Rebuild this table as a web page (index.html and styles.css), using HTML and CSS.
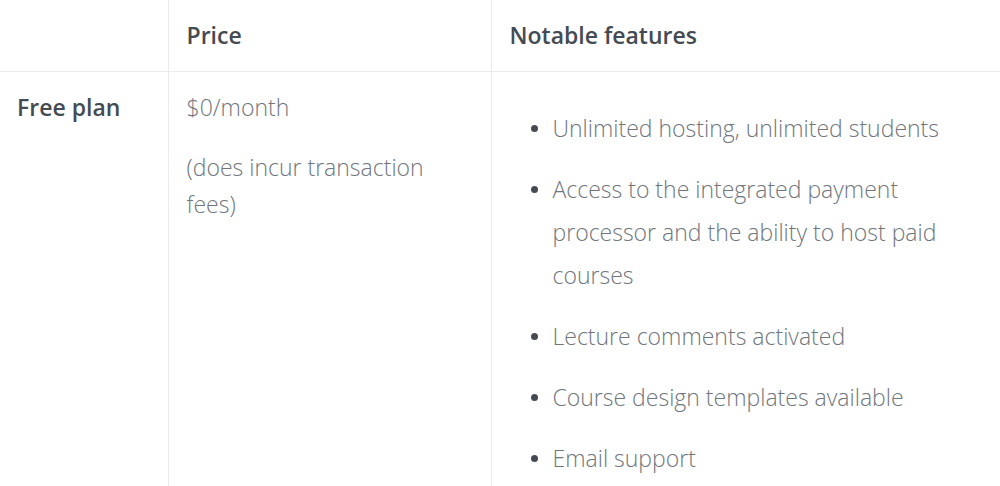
FILE: index.html
```html
<!DOCTYPE html>
<html lang="en">
<head>
<meta charset="utf-8">
<title>Plan comparison</title>
<link rel="stylesheet" href="styles.css">
</head>
<body>
<table class="plans">
  <colgroup>
    <col class="c-plan">
    <col class="c-price">
    <col class="c-feat">
  </colgroup>
  <thead>
    <tr>
      <th class="cell-plan"></th>
      <th>Price</th>
      <th>Notable features</th>
    </tr>
  </thead>
  <tbody>
    <tr class="body-row">
      <th class="cell-plan row-head">Free plan</th>
      <td class="price">
        <p>$0/month</p>
        <p>(does incur transaction fees)</p>
      </td>
      <td class="features">
        <ul>
          <li>Unlimited hosting, unlimited students</li>
          <li>Access to the integrated payment processor and the ability to host paid courses</li>
          <li>Lecture comments activated</li>
          <li>Course design templates available</li>
          <li>Email support</li>
        </ul>
      </td>
    </tr>
  </tbody>
</table>
</body>
</html>
```
FILE: styles.css
```css
html, body {
  margin: 0;
  padding: 0;
  background: #fff;
}
body {
  font-family: "Open Sans", "Liberation Sans", sans-serif;
  overflow: hidden;
  height: 486px;
}
.plans {
  border-collapse: collapse;
  width: 1000px;
  table-layout: fixed;
}
.c-plan { width: 168px; }
.c-price { width: 323px; }
.c-feat { width: 509px; }
.plans th, .plans td {
  border: 1px solid #ececec;
  vertical-align: top;
  text-align: left;
  padding: 0 18px;
}
.plans thead th {
  border-top: none;
  height: 71px;
  vertical-align: middle;
  padding: 0 18px;
  font-size: 23px;
  font-weight: 600;
  color: #454b52;
  box-sizing: border-box;
}
.body-row { height: 560px; }
.plans .cell-plan { border-left: none; padding-left: 17px; padding-right: 10px; }
.row-head {
  font-size: 23px;
  font-weight: 600;
  color: #454b52;
  padding-top: 20px !important;
  line-height: 30px;
}
.price {
  font-size: 23px;
  font-weight: 300;
  color: #70767c;
  padding-top: 17px !important;
}
.price p {
  margin: 0 0 23px;
  line-height: 37px;
}
.features {
  font-size: 23px;
  font-weight: 300;
  color: #70767c;
}
.features ul {
  margin: 35px 0 0;
  padding-left: 43px;
  list-style: none;
}
.features li {
  position: relative;
  line-height: 43px;
  margin-bottom: 18px;
}
.features li::before {
  content: "";
  position: absolute;
  left: -22px;
  top: 18px;
  width: 7px;
  height: 7px;
  border-radius: 50%;
  background: #454b52;
}
```
